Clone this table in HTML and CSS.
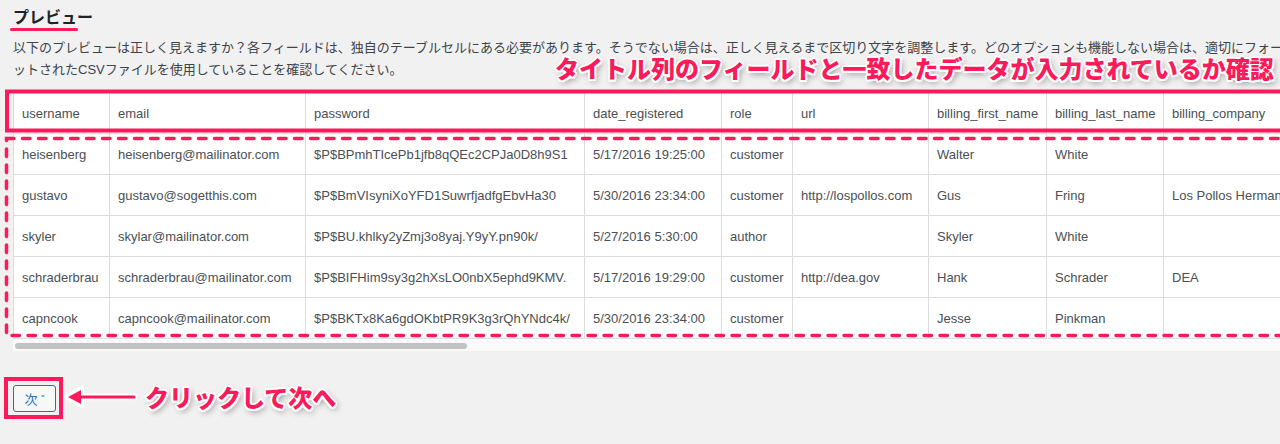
FILE: index.html
```html
<!DOCTYPE html>
<html lang="ja">
<head>
<meta charset="utf-8">
<title>プレビュー</title>
<link rel="stylesheet" href="styles.css">
</head>
<body>
<main class="page">
  <h2 class="title">プレビュー</h2>
  <p class="desc">以下のプレビューは正しく見えますか？各フィールドは、独自のテーブルセルにある必要があります。そうでない場合は、正しく見えるまで区切り文字を調整します。どのオプションも機能しない場合は、適切にフォーマットされたCSVファイルを使用していることを確認してください。</p>

  <div class="table-wrap">
    <table class="preview">
      <colgroup>
        <col class="c-user"><col class="c-email"><col class="c-pass"><col class="c-date"><col class="c-role"><col class="c-url"><col class="c-bfn"><col class="c-bln"><col class="c-bco">
      </colgroup>
      <thead>
        <tr><th>username</th><th>email</th><th>password</th><th>date_registered</th><th>role</th><th>url</th><th>billing_first_name</th><th>billing_last_name</th><th>billing_company</th></tr>
      </thead>
      <tbody>
        <tr><td>heisenberg</td><td>heisenberg@mailinator.com</td><td>$P$BPmhTIcePb1jfb8qQEc2CPJa0D8h9S1</td><td>5/17/2016 19:25:00</td><td>customer</td><td></td><td>Walter</td><td>White</td><td></td></tr>
        <tr><td>gustavo</td><td>gustavo@sogetthis.com</td><td>$P$BmVIsyniXoYFD1SuwrfjadfgEbvHa30</td><td>5/30/2016 23:34:00</td><td>customer</td><td>http://lospollos.com</td><td>Gus</td><td>Fring</td><td>Los Pollos Hermanos</td></tr>
        <tr><td>skyler</td><td>skylar@mailinator.com</td><td>$P$BU.khlky2yZmj3o8yaj.Y9yY.pn90k/</td><td>5/27/2016 5:30:00</td><td>author</td><td></td><td>Skyler</td><td>White</td><td></td></tr>
        <tr><td>schraderbrau</td><td>schraderbrau@mailinator.com</td><td>$P$BIFHim9sy3g2hXsLO0nbX5ephd9KMV.</td><td>5/17/2016 19:29:00</td><td>customer</td><td>http://dea.gov</td><td>Hank</td><td>Schrader</td><td>DEA</td></tr>
        <tr><td>capncook</td><td>capncook@mailinator.com</td><td>$P$BKTx8Ka6gdOKbtPR9K3g3rQhYNdc4k/</td><td>5/30/2016 23:34:00</td><td>customer</td><td></td><td>Jesse</td><td>Pinkman</td><td></td></tr>
      </tbody>
    </table>
    <div class="scrollbar"></div>
  </div>

  <div class="actions">
    <button class="btn" type="button">次 <span class="raquo">"</span></button>
  </div>
</main>

<div class="annot">
  <div class="underline"></div>
  <div class="note note-top">タイトル列のフィールドと一致したデータが入力されているか確認</div>
  <svg class="frames" width="1280" height="444" viewBox="0 0 1280 444">
    <rect x="7" y="91.5" width="1300" height="39" fill="none" stroke="#fd1a5b" stroke-width="4"/>
    <rect x="6.5" y="138.5" width="1300" height="197" fill="none" stroke="#fd1a5b" stroke-width="3.5" stroke-dasharray="7.5 8.5" stroke-linecap="round"/>
    <rect x="6" y="379" width="55" height="38" fill="none" stroke="#fd1a5b" stroke-width="4"/>
    <g>
      <line x1="78" y1="397" x2="134" y2="397" stroke="#fff" stroke-width="7" stroke-linecap="round"/>
      <path d="M66 397 L82 388 L82 406 Z" fill="#fff" stroke="#fff" stroke-width="4" stroke-linejoin="round"/>
      <line x1="78" y1="397" x2="134" y2="397" stroke="#fd1a5b" stroke-width="3" stroke-linecap="round"/>
      <path d="M68 397 L81 390 L81 404 Z" fill="#fd1a5b"/>
    </g>
  </svg>
  <div class="note note-btn">クリックして次へ</div>
</div>
</body>
</html>
```

FILE: styles.css
```css
html, body {
  margin: 0;
  padding: 0;
}
body {
  background: #f1f1f1;
  font-family: "Liberation Sans", "Noto Sans CJK JP", sans-serif;
  color: #3c434a;
  width: 1280px;
  height: 444px;
  overflow: hidden;
  position: relative;
}
.page {
  padding-left: 13px;
}
.title {
  margin: 0;
  padding-top: 7px;
  font-size: 16px;
  line-height: 21px;
  font-weight: 700;
  color: #1d2327;
}
.desc {
  margin: 9px 0 0 0;
  width: 1288px;
  font-size: 13px;
  line-height: 22px;
  color: #3c434a;
}
.table-wrap {
  margin-top: 11px;
  background: #fafafa;
  overflow: hidden;
  padding-bottom: 2px;
}
.preview {
  border-collapse: collapse;
  table-layout: fixed;
  width: 1300px;
  background: #fff;
  font-size: 13px;
  color: #4b4f54;
}
.c-user { width: 96px; }
.c-email { width: 196px; }
.c-pass { width: 279px; }
.c-date { width: 137px; }
.c-role { width: 71px; }
.c-url { width: 136px; }
.c-bfn { width: 118px; }
.c-bln { width: 117px; }
.c-bco { width: 150px; }
.preview th,
.preview td {
  height: 40px;
  padding: 0 8px;
  border: 1px solid #dcdcde;
  text-align: left;
  font-weight: 400;
  white-space: nowrap;
  overflow: hidden;
  box-sizing: border-box;
}
.preview tr {
  height: 41px;
}
.scrollbar {
  margin: 4px 0 0 2px;
  width: 452px;
  height: 6px;
  border-radius: 3px;
  background: #c2c2c2;
}
.actions {
  margin-top: 34px;
  display: flex;
}
.btn {
  width: 43px;
  height: 27px;
  padding: 0;
  border: 1px solid #2271b1;
  border-radius: 3px;
  background: #f6f7f7;
  color: #2271b1;
  font-family: "Liberation Sans", "Noto Sans CJK JP", sans-serif;
  font-size: 13px;
  line-height: 25px;
}
.raquo {
  font-size: 9px;
  vertical-align: 3px;
}

/* annotation overlay */
.annot {
  position: absolute;
  inset: 0;
  pointer-events: none;
}
.underline {
  position: absolute;
  left: 10px;
  top: 28px;
  width: 68px;
  height: 3px;
  border-radius: 2px;
  background: #fd1a5b;
}
.frames {
  position: absolute;
  left: 0;
  top: 0;
}
.note {
  position: absolute;
  font-family: "Noto Sans CJK JP", sans-serif;
  font-weight: 900;
  font-size: 24px;
  line-height: 30px;
  color: #fd1a5b;
  white-space: nowrap;
  text-shadow:
    2px 0 0 #fff, -2px 0 0 #fff, 0 2px 0 #fff, 0 -2px 0 #fff,
    1.5px 1.5px 0 #fff, -1.5px 1.5px 0 #fff, 1.5px -1.5px 0 #fff, -1.5px -1.5px 0 #fff,
    2px 3px 6px rgba(0, 0, 0, 0.45);
}
.note-top {
  left: 555px;
  top: 53px;
}
.note-btn {
  left: 145px;
  top: 382px;
}
```
